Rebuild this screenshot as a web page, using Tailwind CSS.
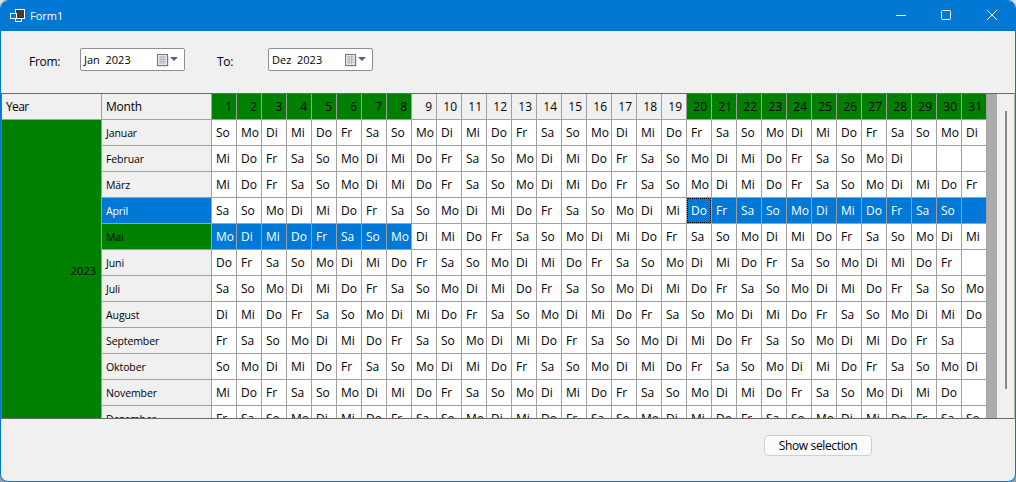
<!DOCTYPE html>
<html>
<head>
<meta charset="utf-8">
<script src="https://cdn.jsdelivr.net/npm/@tailwindcss/browser@4"></script>
</head>
<body class="m-0 bg-linear-to-b from-[#e0e0e0] to-[#999999] overflow-hidden">
<div class="w-[1016px] h-[482px] flex flex-col rounded-[8px] overflow-hidden border border-[#0078d4] bg-[#f0f0f0] text-[12px] leading-[16px] text-black font-['Open_Sans','Noto_Sans',sans-serif]">
  <header class="h-[31px] shrink-0 -mx-px -mt-px bg-[#0078d4] flex items-center text-white">
    <svg class="ml-[10px] w-[16px] h-[16px]" viewBox="0 0 16 16">
      <rect x="5.5" y="1.5" width="9" height="9" fill="#3c3c3c" stroke="#fff"/>
      <rect x="0.5" y="5.5" width="6" height="5" fill="#0078d4" stroke="#fff"/>
      <rect x="5.5" y="10.5" width="6" height="3" fill="#0078d4" stroke="#fff"/>
    </svg>
    <span class="ml-[4px] text-[11px]">Form1</span>
    <div class="ml-auto flex items-start h-full">
      <svg class="w-[46px] h-[31px]" viewBox="0 0 46 31"><path d="M18 15.5H28" stroke="#fff" fill="none"/></svg>
      <svg class="w-[46px] h-[31px]" viewBox="0 0 46 31"><rect x="17.5" y="10.5" width="9" height="9" rx="1" stroke="#fff" fill="none"/></svg>
      <svg class="w-[46px] h-[31px]" viewBox="0 0 46 31"><path d="M17 10L27 20M27 10L17 20" stroke="#fff" fill="none"/></svg>
    </div>
  </header>

  <section class="h-[62px] shrink-0 flex items-start">
    <span class="ml-[28px] w-[51px] mt-[23px] tracking-[-0.3px]">From:</span>
    <div class="mt-[17px] w-[105px] h-[23px] rounded-[2px] border border-[#8f8f8f] bg-white flex items-center pl-[3px] pr-[4px]">
      <span class="whitespace-pre text-[11px]">Jan  2023</span>
      <svg class="ml-auto w-[24px] h-[14px]" viewBox="0 0 24 14">
        <rect x="2.5" y="2.5" width="10" height="11" fill="#c9c9c9"/>
        <rect x="1.5" y="1.5" width="10" height="11" fill="#e2e4ea" stroke="#77777c"/>
        <path d="M3 4H10M3 6.5H10M3 9H10M5 3V11M7.5 3V11" stroke="#b4b7c0" fill="none"/>
        <path d="M14 4H22L18 8Z" fill="#4f6282"/>
      </svg>
    </div>
    <span class="ml-[32px] w-[51px] mt-[23px] tracking-[-0.3px]">To:</span>
    <div class="mt-[17px] w-[105px] h-[23px] rounded-[2px] border border-[#8f8f8f] bg-white flex items-center pl-[3px] pr-[4px]">
      <span class="whitespace-pre text-[11px]">Dez  2023</span>
      <svg class="ml-auto w-[24px] h-[14px]" viewBox="0 0 24 14">
        <rect x="2.5" y="2.5" width="10" height="11" fill="#c9c9c9"/>
        <rect x="1.5" y="1.5" width="10" height="11" fill="#e2e4ea" stroke="#77777c"/>
        <path d="M3 4H10M3 6.5H10M3 9H10M5 3V11M7.5 3V11" stroke="#b4b7c0" fill="none"/>
        <path d="M14 4H22L18 8Z" fill="#4f6282"/>
      </svg>
    </div>
  </section>

  <section class="h-[326px] shrink-0 border border-[#696969] border-r-[#b0b0b0] flex overflow-hidden">
    <div id="grid" class="w-[985px] shrink-0 grid grid-cols-[100px_110px_repeat(31,25px)] auto-rows-[26px] content-start"></div>
    <div class="w-[10px] shrink-0 bg-[#ababab]"></div>
    <div class="flex-1 bg-[#f0f0f0] relative">
      <div class="absolute left-[8px] top-[17px] w-[2px] h-[278px] bg-[#8a8a8a]"></div>
    </div>
  </section>

  <section class="flex-1 relative">
    <button class="absolute left-[763px] top-[16px] w-[108px] h-[21px] rounded-[4px] border border-[#d0d0d0] bg-[#fbfbfb] text-[12px] leading-[16px] tracking-[-0.35px]">Show selection</button>
  </section>
</div>
<script>
  var months = [['Januar',31],['Februar',28],['März',31],['April',30],['Mai',31],['Juni',30],['Juli',31],['August',31],['September',30],['Oktober',31],['November',30],['Dezember',31]];
  var wd = ['So','Mo','Di','Mi','Do','Fr','Sa'];
  var h = '';
  h += '<div class="border-r border-b border-[#a0a0a0] bg-[#f0f0f0] pl-[4px] flex items-center tracking-[-0.6px]">Year</div>';
  h += '<div class="border-r border-b border-[#a0a0a0] bg-[#f0f0f0] pl-[4px] flex items-center tracking-[-0.2px]">Month</div>';
  for (var d = 1; d <= 31; d++) {
    var green = d <= 8 || d >= 20;
    h += green
      ? '<div class="border-r border-b border-[#a0a0a0] bg-[#008000] pr-[4px] flex items-center justify-end">' + d + '</div>'
      : '<div class="border-r border-b border-[#a0a0a0] bg-[#f0f0f0] pr-[4px] flex items-center justify-end">' + d + '</div>';
  }
  h += '<div class="row-span-12 border-r border-[#a0a0a0] bg-[#008000] pr-[5px] pb-[10px] text-[11px] flex items-center justify-end">2023</div>';
  var start = 0;
  months.forEach(function (m, i) {
    var cls = 'border-r border-b border-[#a0a0a0] bg-[#f0f0f0] pl-[4px] flex items-center text-[10.5px] tracking-[-0.1px]';
    if (i === 3) cls = 'border-r border-b border-[#a0a0a0] bg-[#0078d7] text-white pl-[4px] flex items-center text-[10.5px] tracking-[-0.1px]';
    if (i === 4) cls = 'border-r border-b border-[#a0a0a0] bg-[#008000] pl-[4px] flex items-center text-[10.5px] tracking-[-0.1px]';
    h += '<div class="' + cls + '">' + m[0] + '</div>';
    for (var d = 1; d <= 31; d++) {
      var t = d <= m[1] ? wd[(start + d - 1) % 7] : '';
      var sel = (i === 3 && d >= 20) || (i === 4 && d <= 8);
      var c = 'border-r border-b border-[#a0a0a0] bg-white pl-[4px] flex items-center whitespace-nowrap overflow-hidden';
      if (sel) c = 'relative border-r border-b border-[#a0a0a0] bg-[#0078d7] text-white pl-[4px] flex items-center whitespace-nowrap overflow-hidden';
      var focus = (i === 3 && d === 20) ? '<span class="absolute inset-0 border border-dotted border-black"></span>' : '';
      h += '<div class="' + c + '">' + t + focus + '</div>';
    }
    start += m[1];
  });
  document.getElementById('grid').innerHTML = h;
</script>
</body>
</html>
